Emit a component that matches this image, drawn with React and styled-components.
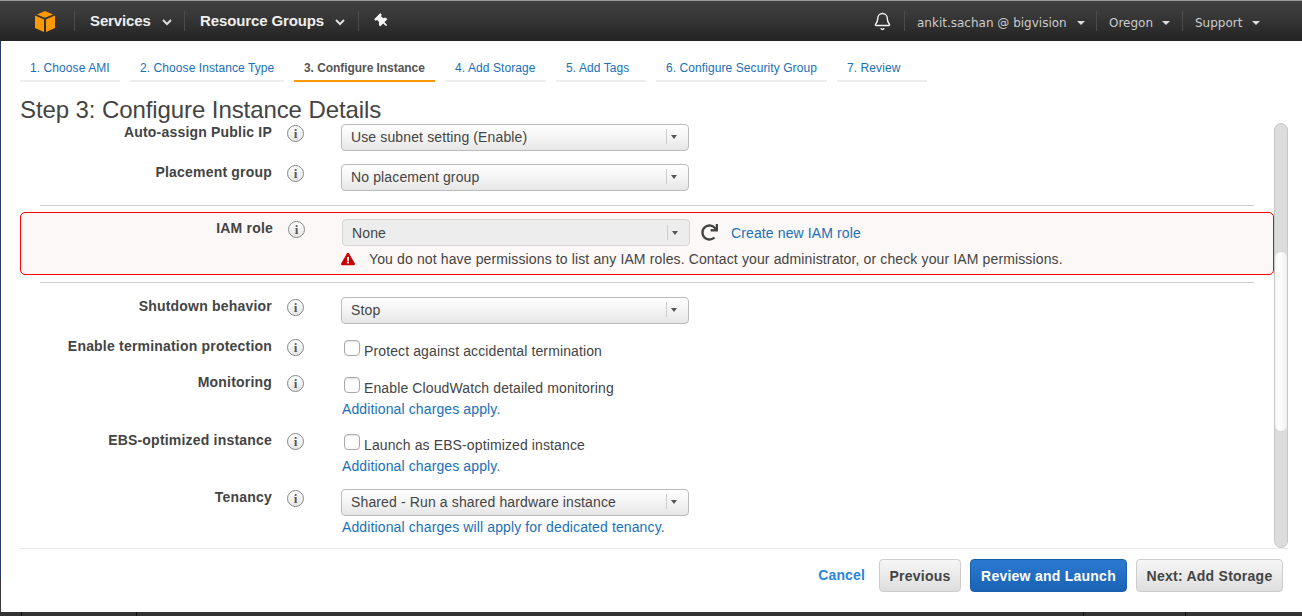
import React from "react";
import styled, { createGlobalStyle } from "styled-components";
import { FaExclamationTriangle, FaRedo, FaThumbtack } from "react-icons/fa";
import { Bell } from "lucide-react";

const GlobalStyle = createGlobalStyle`
  html, body {
    margin: 0;
    padding: 0;
    background: #fff;
    font-family: "Liberation Sans", Arial, sans-serif;
    color: #444;
  }
`;

const Page = styled.div`
  position: relative;
  width: 1302px;
  height: 616px;
  overflow: hidden;
  display: flex;
  flex-direction: column;
  background: #fff;
  /* window edge showing behind the page */
  &::before {
    content: "";
    position: absolute;
    left: 0;
    top: 41px;
    width: 1px;
    height: 571px;
    background: linear-gradient(#2a3a66 94%, #3a3a3a 94%);
  }
`;

const TopEdge = styled.div`
  height: 1px;
  background: #9a9a9a;
`;

/* top navigation */
const Nav = styled.nav`
  height: 40px;
  flex: none;
  display: flex;
  align-items: center;
  background: linear-gradient(#3f3f3f, #3a3a3a 30%, #232323);
  box-sizing: border-box;
`;

const LogoCell = styled.div`
  width: 74px;
  display: flex;
  justify-content: flex-end;
  padding-right: 19px;
  box-sizing: border-box;
`;

const NavDivider = styled.span`
  width: 1px;
  height: 20px;
  background: #4c4c4c;
  flex: none;
`;

const NavMenu = styled.div`
  display: flex;
  align-items: center;
  width: ${(p) => p.$w}px;
  padding-left: ${(p) => p.$pad}px;
  box-sizing: border-box;
  color: #eee;
  font-size: 15px;
  font-weight: bold;
  letter-spacing: -0.12px;
  margin-top: -1px;
`;

const Chevron = styled.svg`
  width: 10px;
  height: 7px;
  margin-left: ${(p) => p.$gap}px;
  margin-top: 4px;
  fill: none;
  stroke: #ddd;
  stroke-width: 2;
`;

const PinCell = styled.div`
  margin-left: 16px;
  display: flex;
  color: #f4f4f4;
  svg {
    transform: rotate(-45deg);
  }
`;

const NavRight = styled.div`
  margin-left: auto;
  display: flex;
  align-items: center;
  padding-right: 41px;
`;

const BellCell = styled.div`
  display: flex;
  color: #f2f2f2;
  margin-right: 12px;
`;

const UserMenu = styled.div`
  display: flex;
  align-items: center;
  width: ${(p) => p.$w}px;
  box-sizing: border-box;
  padding-left: 12px;
  padding-top: 3px;
  color: #ccc;
  font-family: "DejaVu Sans", Verdana, sans-serif;
  font-size: 12px;
`;

const NavCaret = styled.span`
  width: 0;
  height: 0;
  margin-left: ${(p) => p.$gap}px;
  border-left: 4px solid transparent;
  border-right: 4px solid transparent;
  border-top: 4px solid #ddd;
`;

/* wizard tabs */
const Tabs = styled.div`
  display: flex;
  gap: 10px;
  padding: 15px 0 0 20px;
  height: 41px;
  box-sizing: border-box;
  flex: none;
`;

const Tab = styled.div`
  width: ${(p) => p.$w}px;
  box-sizing: border-box;
  height: 26px;
  line-height: 24px;
  padding-left: 10px;
  font-size: 12px;
  letter-spacing: ${(p) => (p.$active ? "-0.06px" : "0.08px")};
  white-space: nowrap;
  color: ${(p) => (p.$active ? "#555" : "#1a70b8")};
  font-weight: ${(p) => (p.$active ? "bold" : "normal")};
  border-bottom: 2px solid ${(p) => (p.$active ? "#f90" : "#eee")};
`;

const Heading = styled.h1`
  margin: 14px 0 0 20px;
  height: 27px;
  font-size: 24px;
  line-height: 27px;
  letter-spacing: -0.09px;
  font-weight: normal;
  color: #444;
  flex: none;
`;

/* form */
const Body = styled.div`
  height: 425px;
  flex: none;
  display: flex;
`;

const Pane = styled.div`
  width: 1274px;
  box-sizing: border-box;
  padding-left: 20px;
`;

const Row = styled.div`
  display: flex;
  align-items: flex-start;
  margin-top: ${(p) => p.$mt}px;
`;

const Label = styled.div`
  width: 252px;
  flex: none;
  text-align: right;
  font-size: 14px;
  line-height: 16px;
  font-weight: bold;
  letter-spacing: 0.2px;
  color: #444;
  padding-top: ${(p) => p.$drop || 0}px;
`;

const Info = styled.span`
  width: 15px;
  height: 15px;
  flex: none;
  margin: ${(p) => 1 + (p.$drop || 0)}px 0 0 15px;
  border: 1px solid #888;
  border-radius: 50%;
  background: linear-gradient(#fff, #e6e6e6);
  display: flex;
  align-items: center;
  justify-content: center;
  font-family: "Liberation Serif", serif;
  font-weight: bold;
  font-size: 13px;
  color: #555;
`;

const Field = styled.div`
  margin-left: ${(p) => p.$x}px;
  display: flex;
  flex-direction: column;
`;

const Select = styled.div`
  width: 348px;
  height: 27px;
  box-sizing: border-box;
  display: flex;
  align-items: center;
  justify-content: space-between;
  padding: ${(p) => (p.$disabled ? "0 7px 0 9px" : "0 7px 2px 9px")};
  border: 1px solid ${(p) => (p.$disabled ? "#d5d5d5" : "#bbb")};
  border-radius: 4px;
  font-size: 14px;
  letter-spacing: 0.13px;
  color: #444;
  background: ${(p) =>
    p.$disabled ? "#ededed" : "linear-gradient(#fff, #f4f4f4 50%, #e6e6e6)"};
`;

const SelectArrow = styled.span`
  width: 14px;
  height: 15px;
  border-left: 1px solid #ccc;
  display: flex;
  align-items: center;
  justify-content: center;
  &::after {
    content: "";
    border-left: 3px solid transparent;
    border-right: 3px solid transparent;
    border-top: 4px solid #555;
  }
`;

const Rule = styled.div`
  height: 1px;
  margin: ${(p) => p.$mt}px 20px 0 20px;
  background: #ccc;
`;

const ErrorBox = styled.div`
  margin-top: 6px;
  height: 63px;
  box-sizing: border-box;
  border: 1px solid #f00;
  border-radius: 5px;
  background: #fcf8f7;
  padding-top: 6px;
`;

const RoleRow = styled.div`
  display: flex;
  align-items: center;
`;

const Refresh = styled.span`
  display: flex;
  margin-left: 11px;
  color: #444;
`;

const Link = styled.a`
  color: #1a70b8;
  font-size: 14px;
  line-height: 16px;
  letter-spacing: 0.12px;
  margin-left: ${(p) => p.$ml || 0}px;
`;

const NoteLink = styled(Link)`
  margin-top: ${(p) => p.$mt || 5}px;
`;

const WarnRow = styled.div`
  display: flex;
  align-items: center;
  margin-top: 5px;
  margin-left: -1px;
  font-size: 14px;
  line-height: 16px;
  letter-spacing: 0.13px;
  color: #444;
  height: 16px;
  white-space: nowrap;
  svg {
    color: #c80000;
    margin-right: 14px;
    flex: none;
  }
`;

const CheckRow = styled.label`
  display: flex;
  align-items: flex-start;
  font-size: 14px;
  line-height: 16px;
  letter-spacing: 0.12px;
  margin-left: ${(p) => p.$ml || 0}px;
  margin-top: ${(p) => p.$mt || 0}px;
`;

const Check = styled.input.attrs({ type: "checkbox" })`
  appearance: none;
  width: 16px;
  height: 16px;
  box-sizing: border-box;
  margin: 2px 4px 0 0;
  border: 1px solid #aaa;
  border-radius: 4px;
  background: #fff;
  box-shadow: inset 0 1px 2px rgba(0, 0, 0, 0.12);
`;

const CheckText = styled.span`
  margin-top: 5px;
  color: #444;
`;

/* fake scrollbar */
const Rail = styled.div`
  width: 14px;
  height: 425px;
  border-radius: 7px;
  overflow: hidden;
  border: 1px solid #c8c8c8;
  background: #dcdcdc;
  padding-top: 127px;
  box-sizing: border-box;
`;

const Thumb = styled.div`
  height: 181px;
  margin: 0 -1px;
  border-radius: 7px;
  border: 1px solid #d8d8d8;
  box-sizing: border-box;
  background: linear-gradient(90deg, #f2f2f2, #fff 30%, #f0f0f0);
`;

/* footer */
const Footer = styled.div`
  flex: none;
  height: 64px;
  box-sizing: border-box;
  margin-left: 20px;
  margin-right: 14px;
  border-top: 1px solid #e8e8e8;
  display: flex;
  justify-content: flex-end;
  align-items: flex-start;
  padding: 10px 5px 0 0;
  gap: 9px;
`;

const Cancel = styled.a`
  color: #2c86d6;
  font-size: 14px;
  font-weight: bold;
  line-height: 33px;
  margin-right: 5px;
  letter-spacing: 0.15px;
`;

const Button = styled.button`
  height: 33px;
  width: ${(p) => p.$w}px;
  box-sizing: border-box;
  padding: 0;
  border-radius: 4px;
  font-family: inherit;
  font-size: 14px;
  font-weight: bold;
  letter-spacing: 0.25px;
  color: ${(p) => (p.$primary ? "#fff" : "#444")};
  border: 1px solid ${(p) => (p.$primary ? "#1a5fae" : "#ccc")};
  background: ${(p) =>
    p.$primary
      ? "linear-gradient(#2b7ad2, #1a62b4)"
      : "linear-gradient(#f6f6f6, #dedede)"};
`;

const BottomBar = styled.div`
  flex: none;
  height: 4px;
  background: #333;
  display: flex;
`;

const BottomTick = styled.span`
  width: 1px;
  background: #111;
  margin-left: ${(p) => p.$ml}px;
`;

const Logo = () => (
  <svg width="20" height="21" viewBox="0 0 20 21">
    <path d="M10 0 L2 3.4 L10 6.8 L18 3.4 Z" fill="#f90" />
    <path d="M0 4.6 L9 8.4 V21 L0 17 Z" fill="#f90" />
    <path d="M20 4.6 L11 8.4 V21 L20 17 Z" fill="#f90" />
  </svg>
);

const DownChevron = ({ gap }) => (
  <Chevron $gap={gap} viewBox="0 0 10 7">
    <polyline points="1,1 5,5 9,1" />
  </Chevron>
);

const tabs = [
  ["1. Choose AMI", 100],
  ["2. Choose Instance Type", 154],
  ["3. Configure Instance", 141, true],
  ["4. Add Storage", 101],
  ["5. Add Tags", 90],
  ["6. Configure Security Group", 171],
  ["7. Review", 90],
];

const DropDown = ({ children, disabled }) => (
  <Select $disabled={disabled}>
    {children}
    <SelectArrow />
  </Select>
);

export default function App() {
  return (
    <Page>
      <GlobalStyle />
      <TopEdge />
      <Nav>
        <LogoCell>
          <Logo />
        </LogoCell>
        <NavDivider />
        <NavMenu $w={109} $pad={15}>
          Services
          <DownChevron gap={11} />
        </NavMenu>
        <NavDivider />
        <NavMenu $w={173} $pad={15}>
          Resource Groups
          <DownChevron gap={11} />
        </NavMenu>
        <NavDivider />
        <PinCell>
          <FaThumbtack size={14} />
        </PinCell>
        <NavRight>
          <BellCell>
            <Bell size={19} strokeWidth={1.8} />
          </BellCell>
          <NavDivider />
          <UserMenu $w={191}>
            ankit.sachan @ bigvision
            <NavCaret $gap={10} />
          </UserMenu>
          <NavDivider />
          <UserMenu $w={85}>
            Oregon
            <NavCaret $gap={9} />
          </UserMenu>
          <NavDivider />
          <UserMenu $w={78}>
            Support
            <NavCaret $gap={10} />
          </UserMenu>
        </NavRight>
      </Nav>

      <Tabs>
        {tabs.map(([label, w, active]) => (
          <Tab key={label} $w={w} $active={active}>
            {label}
          </Tab>
        ))}
      </Tabs>

      <Heading>Step 3: Configure Instance Details</Heading>

      <Body>
        <Pane>
          <Row $mt={1}>
            <Label>Auto-assign Public IP</Label>
            <Info>i</Info>
            <Field $x={37}>
              <DropDown>Use subnet setting (Enable)</DropDown>
            </Field>
          </Row>
          <Row $mt={13}>
            <Label>Placement group</Label>
            <Info>i</Info>
            <Field $x={37}>
              <DropDown>No placement group</DropDown>
            </Field>
          </Row>
          <Rule $mt={14} />
          <ErrorBox>
            <Row $mt={0}>
              <Label $drop={1}>IAM role</Label>
              <Info $drop={1}>i</Info>
              <Field $x={37}>
                <RoleRow>
                  <DropDown disabled>None</DropDown>
                  <Refresh>
                    <FaRedo size={17} />
                  </Refresh>
                  <Link $ml={13}>Create new IAM role</Link>
                </RoleRow>
                <WarnRow>
                  <FaExclamationTriangle size={14} />
                  You do not have permissions to list any IAM roles. Contact your
                  administrator, or check your IAM permissions.
                </WarnRow>
              </Field>
            </Row>
          </ErrorBox>
          <Rule $mt={7} />
          <Row $mt={14}>
            <Label $drop={1}>Shutdown behavior</Label>
            <Info $drop={1}>i</Info>
            <Field $x={37}>
              <DropDown>Stop</DropDown>
            </Field>
          </Row>
          <Row $mt={14}>
            <Label>Enable termination protection</Label>
            <Info>i</Info>
            <Field $x={36}>
              <CheckRow $ml={4}>
                <Check />
                <CheckText>Protect against accidental termination</CheckText>
              </CheckRow>
            </Field>
          </Row>
          <Row $mt={15}>
            <Label>Monitoring</Label>
            <Info>i</Info>
            <Field $x={37}>
              <CheckRow $ml={3} $mt={1}>
                <Check />
                <CheckText>Enable CloudWatch detailed monitoring</CheckText>
              </CheckRow>
              <NoteLink $ml={1}>Additional charges apply.</NoteLink>
            </Field>
          </Row>
          <Row $mt={15}>
            <Label>EBS-optimized instance</Label>
            <Info>i</Info>
            <Field $x={37}>
              <CheckRow $ml={3}>
                <Check />
                <CheckText>Launch as EBS-optimized instance</CheckText>
              </CheckRow>
              <NoteLink $ml={1}>Additional charges apply.</NoteLink>
            </Field>
          </Row>
          <Row $mt={15}>
            <Label>Tenancy</Label>
            <Info>i</Info>
            <Field $x={37}>
              <DropDown>Shared - Run a shared hardware instance</DropDown>
              <NoteLink $ml={1} $mt={3}>
                Additional charges will apply for dedicated tenancy.
              </NoteLink>
            </Field>
          </Row>
        </Pane>
        <Rail>
          <Thumb />
        </Rail>
      </Body>

      <Footer>
        <Cancel>Cancel</Cancel>
        <Button $w={82}>Previous</Button>
        <Button $w={157} $primary>
          Review and Launch
        </Button>
        <Button $w={147}>Next: Add Storage</Button>
      </Footer>

      <BottomBar>
        <BottomTick $ml={21} />
        <BottomTick $ml={114} />
        <BottomTick $ml={946} />
        <BottomTick $ml={101} />
      </BottomBar>
    </Page>
  );
}
